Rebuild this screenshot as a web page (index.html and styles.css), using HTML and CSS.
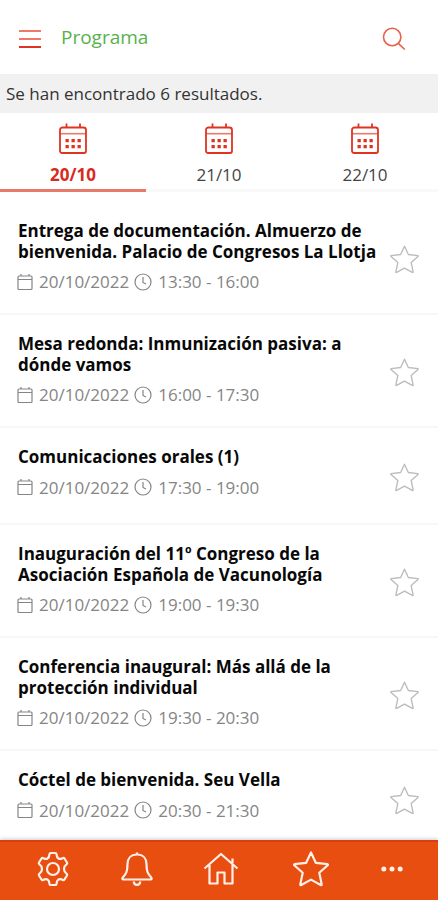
FILE: index.html
```html
<!DOCTYPE html>
<html lang="es">
<head>
    <meta charset="UTF-8">
    <meta name="viewport" content="width=device-width, initial-scale=1.0">
    <title>Programa</title>
    <link rel="stylesheet" href="styles.css">
</head>
<body>
    <!-- Shared icons -->
    <svg class="sprite" width="0" height="0">
        <symbol id="icon-days" viewBox="0 0 28 32">
            <path d="M3.5 4.5h21a2.5 2.5 0 0 1 2.5 2.5v21a2 2 0 0 1-2 2H3a2 2 0 0 1-2-2V7a2.5 2.5 0 0 1 2.5-2.5z" fill="none" stroke="currentColor" stroke-width="1.8"/>
            <path d="M7.5 .5v4M21 .5v4" stroke="currentColor" stroke-width="1.8"/>
            <path d="M1 10.7h26" stroke="currentColor" stroke-width="1.6" opacity=".65"/>
            <path d="M6.5 16h3.3v3.3H6.5zM12.5 16h3.3v3.3h-3.3zM18.5 16h3.3v3.3h-3.3zM6.5 22h3.3v3.3H6.5zM12.5 22h3.3v3.3h-3.3zM18.5 22h3.3v3.3h-3.3z" fill="currentColor"/>
        </symbol>
        <symbol id="icon-date" viewBox="0 0 16 18">
            <path d="M2 3h12q1 0 1 1v11.5q0 1-1 1H2q-1 0-1-1V4q0-1 1-1zM1 6.5h14M4 1v2M12 1v2" fill="none" stroke="currentColor" stroke-width="1.2"/>
        </symbol>
        <symbol id="icon-clock" viewBox="0 0 18 18">
            <circle cx="9" cy="9" r="8" fill="none" stroke="currentColor" stroke-width="1.2"/>
            <path d="M9 4v5.5l3 1.5" fill="none" stroke="currentColor" stroke-width="1.2"/>
        </symbol>
        <symbol id="icon-star" viewBox="0 0 36 36">
            <path d="M18 1.5l4.8 10.3 11.7 1.4q.8.3.2 1l-8.400 7.600 2.400 11.600q0 1-1 .6L18 28.600 8.300 34q-1 .4-1-.6l2.400-11.600-8.400-7.600q-.6-.7.2-1l11.700-1.400z" fill="none" stroke="currentColor" stroke-linejoin="round"/>
        </symbol>
    </svg>

    <header class="topbar">
        <button class="menu-btn" aria-label="Menú"><span></span><span></span><span></span></button>
        <h1 class="topbar-title">Programa</h1>
        <svg class="search" viewBox="0 0 24 24">
            <circle cx="10.2" cy="10" r="8.7"/>
            <path d="M16.3 16.3l6.5 6.2"/>
        </svg>
    </header>

    <div class="results">Se han encontrado 6 resultados.</div>

    <nav class="days">
        <a class="day active"><svg><use href="#icon-days"/></svg>20/10</a>
        <a class="day"><svg><use href="#icon-days"/></svg>21/10</a>
        <a class="day"><svg><use href="#icon-days"/></svg>22/10</a>
    </nav>

    <main class="sessions">
        <article class="session">
            <div class="session-info">
                <h2>Entrega de documentación. Almuerzo de<br>bienvenida. Palacio de Congresos La Llotja</h2>
                <p class="meta"><svg class="date"><use href="#icon-date"/></svg><span>20/10/2022</span><svg class="clock"><use href="#icon-clock"/></svg><span>13:30 - 16:00</span></p>
            </div>
            <svg class="fav"><use href="#icon-star"/></svg>
        </article>
        <article class="session">
            <div class="session-info">
                <h2>Mesa redonda: Inmunización pasiva: a<br>dónde vamos</h2>
                <p class="meta"><svg class="date"><use href="#icon-date"/></svg><span>20/10/2022</span><svg class="clock"><use href="#icon-clock"/></svg><span>16:00 - 17:30</span></p>
            </div>
            <svg class="fav"><use href="#icon-star"/></svg>
        </article>
        <article class="session">
            <div class="session-info">
                <h2>Comunicaciones orales (1)</h2>
                <p class="meta"><svg class="date"><use href="#icon-date"/></svg><span>20/10/2022</span><svg class="clock"><use href="#icon-clock"/></svg><span>17:30 - 19:00</span></p>
            </div>
            <svg class="fav"><use href="#icon-star"/></svg>
        </article>
        <article class="session">
            <div class="session-info">
                <h2>Inauguración del 11º Congreso de la<br>Asociación Española de Vacunología</h2>
                <p class="meta"><svg class="date"><use href="#icon-date"/></svg><span>20/10/2022</span><svg class="clock"><use href="#icon-clock"/></svg><span>19:00 - 19:30</span></p>
            </div>
            <svg class="fav"><use href="#icon-star"/></svg>
        </article>
        <article class="session">
            <div class="session-info">
                <h2>Conferencia inaugural: Más allá de la<br>protección individual</h2>
                <p class="meta"><svg class="date"><use href="#icon-date"/></svg><span>20/10/2022</span><svg class="clock"><use href="#icon-clock"/></svg><span>19:30 - 20:30</span></p>
            </div>
            <svg class="fav"><use href="#icon-star"/></svg>
        </article>
        <article class="session">
            <div class="session-info">
                <h2>Cóctel de bienvenida. Seu Vella</h2>
                <p class="meta"><svg class="date"><use href="#icon-date"/></svg><span>20/10/2022</span><svg class="clock"><use href="#icon-clock"/></svg><span>20:30 - 21:30</span></p>
            </div>
            <svg class="fav"><use href="#icon-star"/></svg>
        </article>
    </main>

    <footer class="tabbar">
        <svg class="tab" viewBox="0 0 36 36">
            <path d="M15.800 2h4.400q1.200 0 1.300 1.200.2 3.300 2 4.300t4-.3q1.300-.8 2 .3l2.500 4q.6 1.100-.5 1.900-2.500 1.700-2.500 4.600t2.500 4.600q1.100.8.5 1.900l-2.500 4q-.7 1.100-2 .3-2.200-1.300-4-.3t-2 4.300Q21.400 34 20.200 34h-4.400q-1.200 0-1.300-1.200-.2-3.300-2-4.300t-4 .3q-1.300.8-2-.3l-2.500-4q-.6-1.100.5-1.900Q7 20.900 7 18t-2.500-4.600q-1.100-.8-.5-1.900l2.500-4q.7-1.100 2-.3 2.200 1.300 4 .3t2-4.300Q14.600 2 15.800 2z"/>
            <circle cx="18" cy="18" r="6"/>
        </svg>
        <svg class="tab" viewBox="0 0 36 36">
            <path d="M18 1.500v2M18 3.500c-6 0-9.500 4-9.500 9.500 0 8-1.500 10-4.600 13.300-1 1.300-.6 2.200.6 2.200h27c1.200 0 1.600-.9.6-2.200-3.100-3.300-4.600-5.300-4.600-13.300 0-5.500-3.500-9.500-9.500-9.500zM14.800 30.500c0 4.500 6.400 4.500 6.400 0"/>
        </svg>
        <svg class="tab" viewBox="0 0 36 36">
            <path d="M1.500 17.500L18 3l16.500 14.500M6.500 14v18.500h8V21.500h7v11h8V14M29.500 12V7.500"/>
        </svg>
        <svg class="tab tab-star"><use href="#icon-star"/></svg>
        <svg class="tab tab-more" viewBox="0 0 36 36">
            <circle cx="9.800" cy="18" r="2.500"/>
            <circle cx="18" cy="18" r="2.500"/>
            <circle cx="26.200" cy="18" r="2.500"/>
        </svg>
    </footer>
</body>
</html>
```
FILE: styles.css
```css
:root {
    --accent: #e84e10;
    --red: #df3422;
    --green: #58b14d;
    --grey: #858585;
}

* {
    box-sizing: border-box;
}

body {
    margin: 0;
    height: 900px;
    display: flex;
    flex-direction: column;
    overflow: hidden;
    background: #fff;
    color: #080808;
    font-family: 'Open Sans', sans-serif;
}

.sprite {
    position: absolute;
}

.topbar {
    height: 74px;
    flex: none;
    display: flex;
    align-items: center;
    padding: 4px 32px 0 19px;
}

.menu-btn {
    width: 22px;
    display: flex;
    flex-direction: column;
    gap: 6px;
    padding: 0;
    border: 0;
    background: none;
}

.menu-btn span {
    height: 2px;
    background: #ed7966;
}

.menu-btn span:last-child {
    background: var(--red);
}

.topbar-title {
    flex: 1;
    margin: -5px 0 0 20px;
    color: var(--green);
    font-size: 19px;
    font-weight: 400;
}

.search {
    width: 24px;
    height: 24px;
    fill: none;
    stroke: #e7604a;
    stroke-width: 1.6;
}

.results {
    height: 39px;
    flex: none;
    padding-left: 6px;
    background: #f1f1f1;
    color: #333;
    font-size: 17px;
    line-height: 40px;
}

.days {
    height: 79px;
    flex: none;
    display: flex;
}

.day {
    flex: 1;
    display: flex;
    flex-direction: column;
    align-items: center;
    padding-top: 10px;
    border-bottom: 3px solid #f9f9f9;
    color: #444;
    font-size: 17px;
    line-height: 24px;
}

.day svg {
    width: 28px;
    height: 32px;
    margin-bottom: 8px;
    color: var(--red);
}

.day.active {
    border-bottom-color: #e87a6c;
    color: #d92b1c;
    font-weight: 700;
}

.sessions {
    flex: 1;
    min-height: 0;
    overflow: hidden;
    padding-top: 10px;
}

.session {
    min-height: 97px;
    display: flex;
    align-items: center;
    padding: 19px 19px 18px 18px;
    border-bottom: 2px solid #f7f7f7;
}

.session-info {
    flex: 1;
    align-self: flex-start;
}

.session h2 {
    margin: 0;
    font-size: 17px;
    font-weight: 700;
    line-height: 20.5px;
    white-space: nowrap;
}

.meta {
    display: flex;
    align-items: center;
    margin: 6px 0 0 -1px;
    color: var(--grey);
    font-size: 17px;
    line-height: 27px;
}

.date {
    width: 16px;
    height: 18px;
    margin-right: 6px;
}

.clock {
    width: 18px;
    height: 18px;
    margin: 0 6px 0 5px;
}

.fav {
    width: 29px;
    height: 29px;
    flex: none;
    margin-top: 2px;
    color: #bcbcbc;
    stroke-width: 1.7;
}

.tabbar {
    height: 60px;
    flex: none;
    display: flex;
    align-items: center;
    gap: 48px;
    padding: 0 0 5px 35px;
    border-top: 2px solid #d83f14;
    background: var(--accent);
    box-shadow: 0 -1px 4px rgba(0, 0, 0, 0.2);
    z-index: 1;
}

.tab {
    width: 36px;
    height: 36px;
    flex: none;
    fill: none;
    stroke: #fff0e9;
    stroke-width: 2.2;
    stroke-linejoin: round;
}

.tab-star {
    margin: 0 -3px 0 6px;
    color: #fff0e9;
}

.tab-more {
    fill: #fff0e9;
    stroke: none;
}
```
